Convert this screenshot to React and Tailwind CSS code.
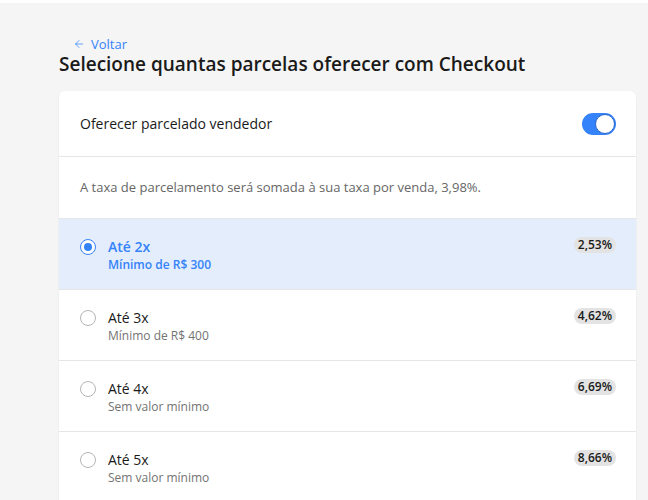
import { ArrowLeft } from "lucide-react";

const options = [
  { label: "Até 2x", sub: "Mínimo de R$ 300", rate: "2,53%", selected: true },
  { label: "Até 3x", sub: "Mínimo de R$ 400", rate: "4,62%" },
  { label: "Até 4x", sub: "Sem valor mínimo", rate: "6,69%" },
  { label: "Até 5x", sub: "Sem valor mínimo", rate: "8,66%" },
];

const Radio = ({ checked }) => (
  <span
    className={`flex h-[16px] w-[16px] shrink-0 items-center justify-center rounded-full border-[1.5px] bg-white ${
      checked ? "border-[#3483fa]" : "border-[#b5b5b5]"
    }`}
  >
    {checked && <span className="h-[8px] w-[8px] rounded-full bg-[#3483fa]" />}
  </span>
);

const OptionRow = ({ label, sub, rate, selected }) => (
  <div
    className={`flex h-[71px] items-start border-t border-[#e6e6e6] pl-[21px] pr-[20px] pt-[19px] ${
      selected ? "bg-[#e3edfb]" : "bg-white"
    }`}
  >
    <div className="flex h-[18px] items-center">
      <Radio checked={selected} />
    </div>
    <div className="ml-[12px] flex-1">
      <p className={`text-[14px] leading-[18px] ${selected ? "font-semibold text-[#3483fa]" : "text-[#1a1a1a]"}`}>
        {label}
      </p>
      <p className={`mt-[1px] text-[12px] leading-[16px] ${selected ? "font-semibold text-[#3483fa]" : "text-[#737373]"}`}>
        {sub}
      </p>
    </div>
    <span className="mt-[-1px] rounded-full bg-[#e3e3e3] px-[4px] text-[12px] font-semibold leading-[16px] text-[#1a1a1a]">
      {rate}
    </span>
  </div>
);

export default function App() {
  return (
    <div className="min-h-[500px] bg-[#f5f5f5] font-['Open_Sans',sans-serif]">
      <div className="h-[3px] bg-white" />
      <div className="pl-[59px] pr-[12px] pt-[33px]">
        <button className="mb-[1px] ml-[14px] flex items-center gap-[6px] text-[13px] leading-[16px] text-[#3483fa]">
          <ArrowLeft size={12} strokeWidth={1.5} />
          Voltar
        </button>
        <h1 className="text-[19px] font-semibold leading-[22px] text-[#1a1a1a]">
          Selecione quantas parcelas oferecer com Checkout
        </h1>
        <div className="mt-[16px] overflow-hidden rounded-t-[6px] bg-white shadow-[0_1px_2px_rgba(0,0,0,0.08)]">
          <div className="flex h-[65px] items-center justify-between pl-[21px] pr-[20px]">
            <span className="text-[14px] text-[#1a1a1a]">Oferecer parcelado vendedor</span>
            <span className="flex h-[22px] w-[34px] items-center justify-end rounded-full bg-[#3483fa] p-[1px]">
              <span className="h-[20px] w-[20px] rounded-full border-[1.5px] border-[#2968c8] bg-white" />
            </span>
          </div>
          <div className="flex h-[62px] items-center border-t border-[#e6e6e6] pl-[21px]">
            <p className="text-[13px] text-[#666666]">
              A taxa de parcelamento será somada à sua taxa por venda, 3,98%.
            </p>
          </div>
          {options.map((o) => (
            <OptionRow key={o.label} {...o} />
          ))}
        </div>
      </div>
    </div>
  );
}
